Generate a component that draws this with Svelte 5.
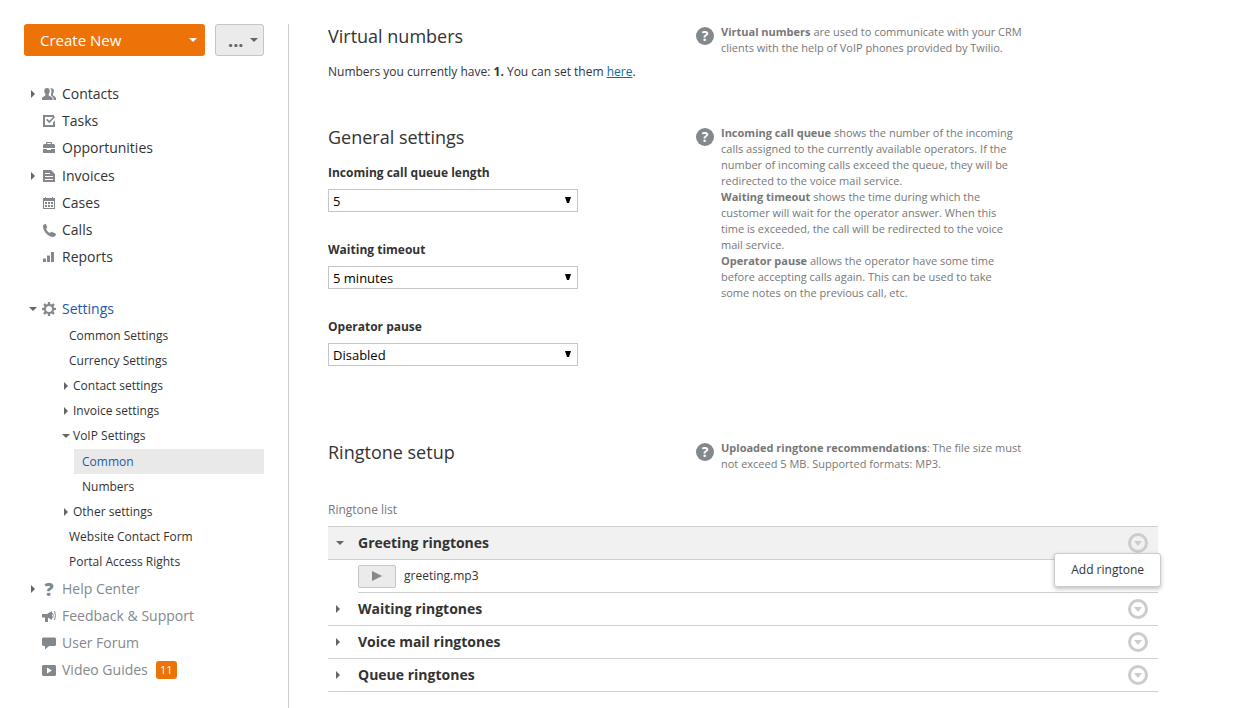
<script>
  const mainNav = [
    { label: 'Contacts', icon: 'contacts', expandable: true },
    { label: 'Tasks', icon: 'tasks' },
    { label: 'Opportunities', icon: 'opportunities' },
    { label: 'Invoices', icon: 'invoices', expandable: true },
    { label: 'Cases', icon: 'cases' },
    { label: 'Calls', icon: 'calls' },
    { label: 'Reports', icon: 'reports' }
  ]
  const settingsNav = [
    { label: 'Common Settings' },
    { label: 'Currency Settings' },
    { label: 'Contact settings', expandable: true },
    { label: 'Invoice settings', expandable: true },
    { label: 'VoIP Settings', expandable: true, children: ['Common', 'Numbers'] },
    { label: 'Other settings', expandable: true },
    { label: 'Website Contact Form' },
    { label: 'Portal Access Rights' }
  ]
  const helpNav = [
    { label: 'Help Center', icon: 'help', expandable: true },
    { label: 'Feedback & Support', icon: 'feedback' },
    { label: 'User Forum', icon: 'forum' },
    { label: 'Video Guides', icon: 'video', badge: 11 }
  ]
  const fields = [
    { id: 'queue', label: 'Incoming call queue length', value: '5', options: ['5', '10', '15'] },
    { id: 'timeout', label: 'Waiting timeout', value: '5 minutes', options: ['5 minutes', '10 minutes'] },
    { id: 'pause', label: 'Operator pause', value: 'Disabled', options: ['Disabled', 'Enabled'] }
  ]
  let ringtones = [
    { label: 'Greeting ringtones', files: ['greeting.mp3'], open: true },
    { label: 'Waiting ringtones', files: [], open: false },
    { label: 'Voice mail ringtones', files: [], open: false },
    { label: 'Queue ringtones', files: [], open: false }
  ]
  let current = 'Common'
  let menu = 0
</script>

{#snippet arrow(open)}
  {#if open}
    <svg class="arrow" width="8" height="8" viewBox="0 0 8 8" aria-hidden="true"><path d="M0 2h8L4 6z" /></svg>
  {:else}
    <svg class="arrow" width="8" height="8" viewBox="0 0 8 8" aria-hidden="true"><path d="M2 0v8l4-4z" /></svg>
  {/if}
{/snippet}

{#snippet icon(name)}
  {#if name === 'help'}
    <span class="icon question" aria-hidden="true">?</span>
  {:else}
    <svg class="icon" width="14" height="15" viewBox="0 0 14 15" aria-hidden="true">
      {#if name === 'contacts'}
        <path d="M5 2c1.900 0 2.800 1.200 2.700 3 0 1.300-.4 2.200-1 2.900v1.300c.2.900 3.800 1.400 3.900 3.200V14H0v-1.600c.1-1.800 3.200-2.300 3.400-3.200V7.900C2.800 7.200 2.300 6.300 2.300 5 2.200 3.200 3.200 2 5 2z" />
        <path d="M8.200 2.300c2.500-.5 3.800.6 3.700 2.700 0 1.300-.4 2.300-1 2.900v1.200c.2.900 3 1.400 3.100 3.200V14h-2.500v-1.700c-.1-1.500-1.600-2.100-2.700-2.600.8-.4.400-1 .1-1.500.7-1.500 1-4.600-.7-5.900z" />
      {:else if name === 'tasks'}
        <path d="M1 2h11v2H3v8h8V9.500l2-2V14H1z" />
        <path d="M4 7l1.300-1.300 2 2L12 3l1 1.300-5.700 5.900z" />
      {:else if name === 'opportunities'}
        <path fill-rule="evenodd" d="M4 4V2.500L4.500 2h5l.5.5V4h2l1 1v3H1V5l1-1zm1.200 0h3.600V3H5.200z" />
        <path d="M1 9h4v1h4V9h4v4H1z" />
      {:else if name === 'invoices'}
        <path fill-rule="evenodd" d="M1 2h8l4 4v8H1zM3 6h5V5H3zm0 3h8V8H3zm0 3h8v-1H3z" />
      {:else if name === 'cases'}
        <path fill-rule="evenodd" d="M1 3h2V2h1v1h6V2h1v1h2v11H1zm1 3v7h10V6z" />
        <path d="M3 7h2v2H3zM6 7h2v2H6zM9 7h2v2H9zM3 10h2v2H3zM6 10h2v2H6zM9 10h2v2H9z" />
      {:else if name === 'calls'}
        <path d="M1 3.300 3 2c.6-.2 1 .2 1.200.7l1 2.300c.1.500 0 .8-.4 1.100l-.8.7c.7 2 2 3.300 4 4.200l1-1c.4-.4.700-.4 1.100-.1l3 1.400c.6.300.9.700.8 1.200-.3 1.500-1.300 2.500-3 2.400C5.500 14.500.600 8.800 1 3.300z" />
      {:else if name === 'reports'}
        <path d="M1 9.500h3V13H1zM5 6.500h3V13H5zM9 3h3v10H9z" />
      {:else if name === 'settings'}
        <circle cx="7" cy="8" r="4" fill="none" stroke="currentColor" stroke-width="2" />
        <path d="M6 1h2l.4 3H5.600zM6 15h2l.4-3H5.600zM0 7v2l3 .4V6.600zM14 7v2l-3 .4V6.600zM1.300 3.700l1.400-1.400L5.200 4 3 6.200zM11.300 2.300l1.400 1.400L11 6.200 8.800 4zM1.300 12.300l1.400 1.400L5.200 12 3 9.800zM11.300 13.700l1.400-1.400L11 9.800 8.800 12z" />
      {:else if name === 'feedback'}
        <path d="M0 6h5l5-3v9L6 9.700V14H3V9.500H0z" />
        <path d="M10.500 5q1.500 2.500 0 5M12.500 3q2 4.500 0 9" fill="none" stroke="currentColor" />
      {:else if name === 'forum'}
        <path d="M1 2.500h12l1 1V10l-1 1H7l-4 3.500V11H1l-1-1V3.500z" />
      {:else if name === 'video'}
        <path fill-rule="evenodd" d="M1 3h12l1 1v9l-1 1H1l-1-1V4zm4 2.500v6l5-3z" />
      {/if}
    </svg>
  {/if}
{/snippet}

{#snippet navItem(item)}
  <li class:expandable={item.expandable}>
    <a class="nav-link" href="#{item.icon}">
      <span class="toggle">{#if item.expandable}{@render arrow(false)}{/if}</span>
      {@render icon(item.icon)}
      <span>{item.label}</span>
      {#if item.badge}<span class="badge">{item.badge}</span>{/if}
    </a>
  </li>
{/snippet}

<div class="page">
  <aside>
    <div class="actions">
      <button class="create">Create New {@render arrow(true)}</button>
      <button class="more" aria-label="More actions"><span>...</span> {@render arrow(true)}</button>
    </div>
    <nav>
      <ul>
        {#each mainNav as item}{@render navItem(item)}{/each}
      </ul>
      <ul class="settings">
        <li>
          <a class="nav-link active" href="#settings">
            <span class="toggle">{@render arrow(true)}</span>
            {@render icon('settings')}
            <span>Settings</span>
          </a>
          <ul class="sub">
            {#each settingsNav as item}
              <li>
                <a class="sub-link" class:parent={item.expandable} href="#settings">
                  {#if item.expandable}{@render arrow(!!item.children)}{/if}
                  {item.label}
                </a>
                {#if item.children}
                  <ul class="leaf">
                    {#each item.children as child}
                      <li><a class="leaf-link" class:current={child === current} href="#voip" on:click={() => current = child}>{child}</a></li>
                    {/each}
                  </ul>
                {/if}
              </li>
            {/each}
          </ul>
        </li>
      </ul>
      <ul class="muted">
        {#each helpNav as item}{@render navItem(item)}{/each}
      </ul>
    </nav>
  </aside>

  <main>
    <section class="numbers">
      <div class="content">
        <h2>Virtual numbers</h2>
        <p>Numbers you currently have: <b>1.</b> You can set them <a href="#numbers">here</a>.</p>
      </div>
      <div class="help">
        <span class="help-icon" aria-hidden="true">?</span>
        <p><b>Virtual numbers</b> are used to communicate with your CRM clients with the help of VoIP phones provided by Twilio.</p>
      </div>
    </section>

    <section class="general">
      <div class="content">
        <h2>General settings</h2>
        {#each fields as field}
          <div class="field">
            <label for={field.id}>{field.label}</label>
            <div class="select">
              <select id={field.id} bind:value={field.value}>
                {#each field.options as option}<option>{option}</option>{/each}
              </select>
              <svg width="6" height="6" viewBox="0 0 6 6" aria-hidden="true"><path d="M0 0h6L4 6H2z" /></svg>
            </div>
          </div>
        {/each}
      </div>
      <div class="help">
        <span class="help-icon" aria-hidden="true">?</span>
        <div>
          <p><b>Incoming call queue</b> shows the number of the incoming calls assigned to the currently available operators. If the number of incoming calls exceed the queue, they will be redirected to the voice mail service.</p>
          <p><b>Waiting timeout</b> shows the time during which the customer will wait for the operator answer. When this time is exceeded, the call will be redirected to the voice mail service.</p>
          <p><b>Operator pause</b> allows the operator have some time before accepting calls again. This can be used to take some notes on the previous call, etc.</p>
        </div>
      </div>
    </section>

    <section class="setup">
      <div class="content">
        <h2>Ringtone setup</h2>
      </div>
      <div class="help">
        <span class="help-icon" aria-hidden="true">?</span>
        <p><b>Uploaded ringtone recommendations</b>: The file size must not exceed 5 MB. Supported formats: MP3.</p>
      </div>
    </section>

    <h3>Ringtone list</h3>
    <ul class="ringtones">
      {#each ringtones as group, i}
        <li>
          <div class="group" class:open={group.open}>
            <button class="group-toggle" aria-expanded={group.open} on:click={() => group.open = !group.open}>
              {@render arrow(group.open)}
              <span>{group.label}</span>
            </button>
            <button class="round" aria-label="{group.label} actions" on:click={() => menu = menu === i ? -1 : i}>
              <svg width="20" height="20" viewBox="0 0 20 20" aria-hidden="true">
                <circle cx="10" cy="10" r="8.500" fill="none" stroke="currentColor" stroke-width="3" />
                <path d="M6 8h8l-4 5z" />
              </svg>
            </button>
            {#if menu === i}
              <div class="menu"><button>Add ringtone</button></div>
            {/if}
          </div>
          {#if group.open}
            {#each group.files as file}
              <div class="file">
                <button class="play" aria-label="Play {file}">
                  <svg width="10" height="10" viewBox="0 0 10 10" aria-hidden="true"><path d="M0 0v10l10-5z" /></svg>
                </button>
                <span>{file}</span>
              </div>
            {/each}
          {/if}
        </li>
      {/each}
    </ul>
  </main>
</div>

<style>
  :global(body) {
    background: #fff;
  }

  .page {
    display: flex;
    box-sizing: border-box;
    min-height: 100vh;
    padding: 24px 0 0 24px;
    font: 12px/16px "Open Sans", "Noto Sans", sans-serif;
    color: #333;
  }

  ul {
    list-style: none;
    margin: 0;
    padding: 0;
  }

  h2, h3, p {
    margin: 0;
    font-weight: normal;
  }

  button {
    box-sizing: border-box;
    font: inherit;
    color: inherit;
    cursor: pointer;
  }

  svg {
    display: block;
    flex: none;
    fill: currentColor;
  }

  .arrow {
    color: #666;
  }

  aside {
    flex: none;
    width: 240px;
    padding-right: 24px;
    border-right: 1px solid #ccc;
  }

  .actions {
    display: flex;
    gap: 10px;
    margin-bottom: 24px;
  }

  .actions button {
    display: flex;
    align-items: center;
    justify-content: space-between;
    height: 32px;
    border-radius: 3px;
  }

  .create {
    flex: 1;
    padding: 0 8px 0 16px;
    border: none;
    background: #ed7309;
    color: #fff;
    font-size: 15px;
  }

  .create .arrow {
    color: #fff;
  }

  .more {
    width: 49px;
    padding: 0 5px 0 12px;
    border: 1px solid #c5c5c5;
    background: #ebebeb;
    color: #666;
    font-size: 18px;
    font-weight: bold;
  }

  .nav-link {
    display: flex;
    align-items: center;
    height: 27px;
    color: #333;
    font-size: 14px;
    text-decoration: none;
  }

  .expandable:not(:first-child), .muted .expandable {
    padding-top: 1px;
  }

  .toggle {
    width: 18px;
    padding-left: 5px;
    box-sizing: border-box;
  }

  .icon {
    width: 14px;
    margin-right: 6px;
    color: #83888d;
  }

  .question {
    font-size: 18px;
    font-weight: 800;
    text-align: center;
  }

  .nav-link.active {
    color: #1a5aa6;
  }

  .muted .nav-link {
    color: #83888d;
  }

  .badge {
    min-width: 21px;
    margin-left: 8px;
    border-radius: 3px;
    background: #ed7309;
    color: #fff;
    font-size: 11px;
    line-height: 18px;
    text-align: center;
  }

  .settings {
    margin-top: 25px;
  }

  .sub {
    padding-top: 1px;
  }

  .sub-link {
    display: flex;
    align-items: center;
    gap: 3px;
    height: 25px;
    padding-left: 45px;
    color: #333;
    text-decoration: none;
  }

  .sub-link.parent {
    padding-left: 38px;
  }

  .leaf {
    margin-left: 50px;
    padding-top: 1px;
  }

  .leaf-link {
    display: block;
    padding-left: 8px;
    color: #333;
    line-height: 25px;
    text-decoration: none;
  }

  .leaf-link.current {
    background: #e9e9e9;
    color: #1a5aa6;
  }

  main {
    flex: 1;
    min-width: 0;
    padding: 0 82px 16px 39px;
  }

  section {
    display: flex;
  }

  .numbers {
    padding-bottom: 45px;
  }

  .general {
    padding-bottom: 74px;
  }

  .setup {
    padding-bottom: 30px;
  }

  .content {
    flex: none;
    width: 368px;
  }

  h2 {
    font-size: 18px;
    line-height: 24px;
  }

  .content p {
    margin-top: 16px;
  }

  .content a {
    color: #116d9d;
  }

  .field {
    width: 250px;
    padding-top: 16px;
    margin-bottom: 14px;
  }

  .field:last-child {
    margin-bottom: 0;
  }

  label {
    display: block;
    margin-bottom: 8px;
    font-weight: bold;
  }

  .select {
    position: relative;
  }

  select {
    display: block;
    box-sizing: border-box;
    width: 100%;
    height: 23px;
    padding: 0 20px 0 4px;
    border: 1px solid #c5c5c5;
    border-radius: 0;
    appearance: none;
    background: #fff;
    color: #000;
    font: 13px "Open Sans", "Noto Sans", sans-serif;
  }

  .select svg {
    position: absolute;
    top: 8px;
    right: 7px;
    fill: #000;
    pointer-events: none;
  }

  .help {
    display: flex;
    align-items: flex-start;
    gap: 7px;
    max-width: 330px;
    color: #777;
    font-size: 11px;
  }

  .general .help {
    max-width: 320px;
  }

  .help-icon {
    flex: none;
    width: 18px;
    margin-top: 3px;
    border-radius: 50%;
    background: #83888d;
    color: #fff;
    font-size: 14px;
    font-weight: bold;
    line-height: 18px;
    text-align: center;
  }

  h3 {
    margin-bottom: 8px;
    color: #777;
    font-size: 12px;
  }

  .ringtones {
    border-top: 1px solid #d0d0d0;
  }

  .group {
    position: relative;
    display: flex;
    align-items: center;
    height: 32px;
    padding-right: 10px;
    border-bottom: 1px solid #d0d0d0;
  }

  .group.open {
    background: #f1f1f1;
  }

  .group-toggle {
    display: flex;
    flex: 1;
    align-items: center;
    gap: 16px;
    padding: 0 0 0 6px;
    border: none;
    background: none;
    font-size: 14px;
    font-weight: bold;
  }

  .open .group-toggle {
    padding-left: 8px;
    gap: 14px;
  }

  .round {
    padding: 0;
    border: none;
    background: none;
    color: #ccc;
  }

  .menu {
    position: absolute;
    top: 26px;
    right: -3px;
    z-index: 1;
    border: 1px solid #ccc;
    border-radius: 3px;
    background: #fff;
    box-shadow: 0 2px 4px rgba(0, 0, 0, 0.25);
  }

  .menu button {
    display: block;
    padding: 8px 16px;
    border: none;
    background: none;
  }

  .file {
    display: flex;
    align-items: center;
    gap: 8px;
    height: 32px;
    margin-left: 30px;
    border-bottom: 1px solid #d0d0d0;
  }

  .play {
    display: flex;
    align-items: center;
    justify-content: center;
    width: 38px;
    height: 23px;
    padding: 0;
    border: 1px solid #c5c5c5;
    border-radius: 2px;
    background: #ebebeb;
    color: #83888d;
  }
</style>
